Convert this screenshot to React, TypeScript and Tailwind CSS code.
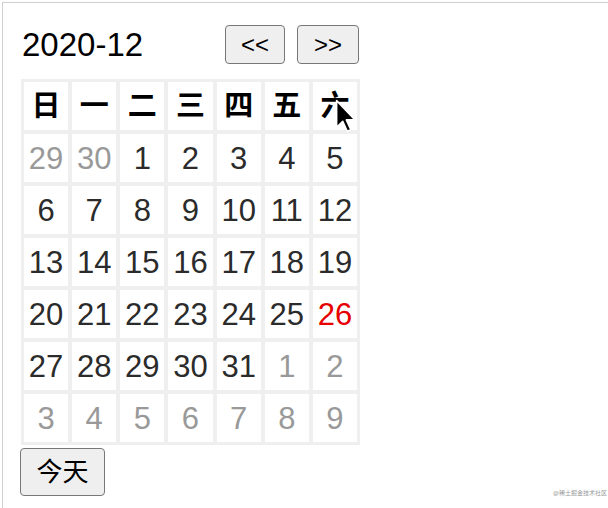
import React from "react";

type Day = { n: number; muted?: boolean; today?: boolean };

const weekDays = ["日", "一", "二", "三", "四", "五", "六"];

const buildDays = (): Day[] => {
  const days: Day[] = [{ n: 29, muted: true }, { n: 30, muted: true }];
  for (let i = 1; i <= 31; i++) days.push({ n: i, today: i === 26 });
  for (let i = 1; i <= 9; i++) days.push({ n: i, muted: true });
  return days;
};

const Cursor = () => (
  <svg
    className="pointer-events-none absolute left-[335px] top-[99px]"
    width="21"
    height="34"
    viewBox="-1 -1 13 21"
  >
    <path
      d="M0 0 L0 16.5 L3.8 12.8 L6.6 19 L8.8 18 L6 11.9 L11.4 11.9 Z"
      fill="#000"
      stroke="#fff"
      strokeWidth="1"
      strokeLinejoin="round"
    />
  </svg>
);

const App = () => {
  const days = buildDays();

  return (
    <div
      className="relative h-[508px] w-[608px] overflow-hidden bg-white"
      style={{ fontFamily: '"Liberation Sans", "Noto Sans CJK SC", sans-serif' }}
    >
      <div className="ml-[2px] mt-[2px] h-[506px] border-l border-t border-[#cfcfcf] pl-[18px] pt-[22px]">
        <div className="w-[339px]">
          <div className="flex h-[39px] items-center justify-between">
            <span className="pl-px text-[33px] leading-none text-black">2020-12</span>
            <div className="flex gap-3">
              <button className="h-[39px] w-[60px] rounded-[4px] border border-[#777] bg-[#efefef] text-[24px] leading-none text-black">
                &lt;&lt;
              </button>
              <button className="mr-px h-[39px] w-[62px] rounded-[4px] border border-[#777] bg-[#efefef] text-[24px] leading-none text-black">
                &gt;&gt;
              </button>
            </div>
          </div>

          <div className="mt-[15px] grid grid-cols-7 gap-[4px] bg-[#efefef] p-[3px]">
            {weekDays.map(d => (
              <div
                key={d}
                className="flex h-[48px] items-center justify-center bg-white text-[29px] font-bold leading-none text-black"
              >
                {d}
              </div>
            ))}
            {days.map((d, i) => (
              <div
                key={i}
                className={`flex h-[48px] items-center justify-center bg-white text-[31px] leading-none ${
                  d.today ? "text-[#e60000]" : d.muted ? "text-[#999]" : "text-[#2b2b2b]"
                }`}
              >
                {d.n}
              </div>
            ))}
          </div>
        </div>

        <button className="ml-[-1px] mt-[3px] h-[48px] w-[85px] rounded-[4px] border border-[#777] bg-[#efefef] text-[26px] leading-none text-black">
          今天
        </button>
      </div>

      <Cursor />

      <span className="absolute left-[553px] top-[490px] text-[6px] leading-none text-[#999]">
        @稀土掘金技术社区
      </span>
    </div>
  );
};

export default App;
